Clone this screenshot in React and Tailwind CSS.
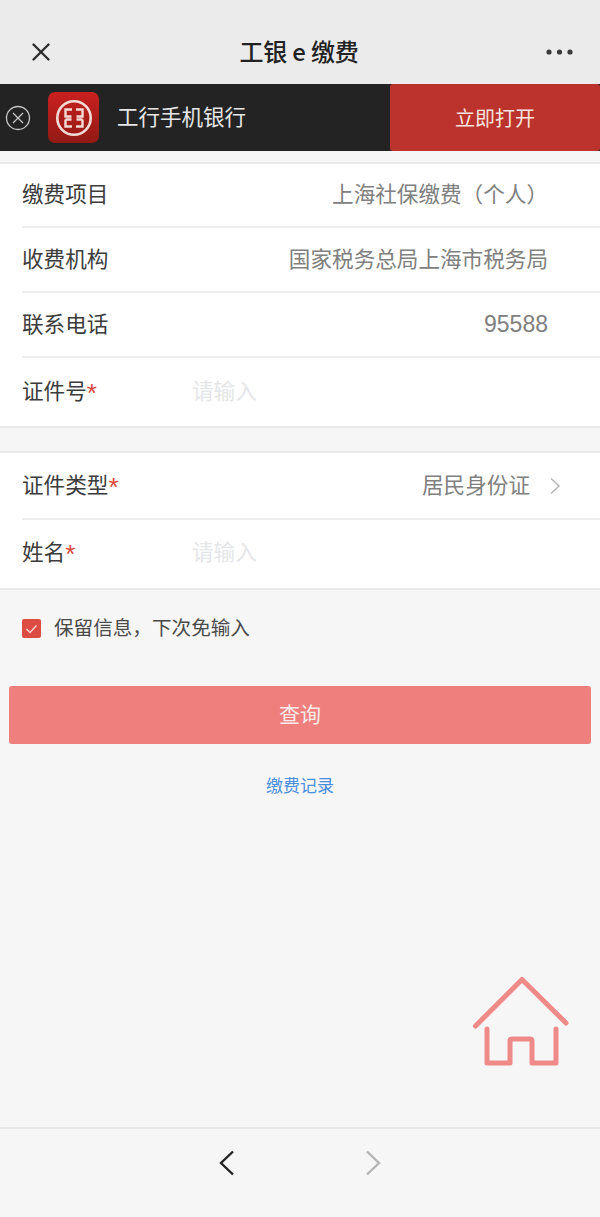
import { X } from 'lucide-react'

const Row = ({ label, required, value, digits, placeholder, chevron, className = 'h-[65px] pb-[6px]', last }) => (
  <div className={`relative flex items-center pl-[22px] ${className}`}>
    <span className="w-[170px] text-[21.6px] leading-none text-[#3c3c3c] whitespace-nowrap">
      {label}
      {required && (
        <span className="align-[-3px] text-[26px] leading-[0] text-[#d9483f]" style={{ fontFamily: '"Liberation Sans", sans-serif' }}>*</span>
      )}
    </span>
    {placeholder && <span className="text-[21.6px] leading-none text-[#e5e6e8]">{placeholder}</span>}
    {value && (
      <span
        className={`ml-auto leading-none text-[#808080] whitespace-nowrap ${chevron ? 'mr-[70px]' : 'mr-[52px]'} ${digits ? 'pt-[4px] text-[23px]' : 'text-[21.6px]'}`}
        style={digits ? { fontFamily: '"Liberation Sans", sans-serif' } : undefined}
      >
        {value}
      </span>
    )}
    {chevron && (
      <svg width="12" height="18" viewBox="0 0 12 18" fill="none" stroke="#b5b5b5" strokeWidth="1.5" className="absolute right-[39px] top-[24px]">
        <polyline points="2,1.5 10,9 2,16.5" />
      </svg>
    )}
    {!last && <div className="absolute left-[22px] right-0 bottom-0 h-[2px] bg-[#eeeeee]" />}
  </div>
)

export default function App() {
  return (
    <div className="flex h-[1217px] w-[600px] flex-col overflow-hidden bg-[#f6f6f6]" style={{ fontFamily: '"Noto Sans CJK SC", "Liberation Sans", sans-serif' }}>

      {/* Title bar */}
      <div className="relative flex h-[84px] shrink-0 items-center justify-center bg-[#ebebeb] pr-[2px] pt-[17px]">
        <X size={30} strokeWidth={1.9} className="absolute left-[26px] top-[37px] text-[#2b2b2b]" />
        <span className="text-[24px] font-medium leading-none tracking-[-0.2px] text-[#222222]">工银 e 缴费</span>
        <svg width="30" height="8" viewBox="0 0 30 8" className="absolute left-[545px] top-[48px]" fill="#3a3a3a">
          <circle cx="4" cy="4" r="2.6" />
          <circle cx="14.5" cy="4" r="2.6" />
          <circle cx="25" cy="4" r="2.6" />
        </svg>
      </div>

      {/* App banner */}
      <div className="flex h-[67px] shrink-0 items-center bg-[#232323]">
        <svg width="26" height="26" viewBox="0 0 26 26" fill="none" stroke="#c9c9c9" strokeWidth="1.3" className="ml-[5px] shrink-0">
          <circle cx="13" cy="13" r="11.5" />
          <path d="M8 8l10 10M18 8L8 18" />
        </svg>
        <div className="ml-[17px] flex h-[51px] w-[51px] shrink-0 items-center justify-center rounded-[7px] bg-gradient-to-b from-[#c9201f] to-[#931a14]">
          <svg width="38" height="38" viewBox="0 0 38 38" fill="none" stroke="#f3dcd6">
            <circle cx="19" cy="19" r="16.7" strokeWidth="2.6" />
            <path d="M17 10.5H10.5v7h6M10.5 20.5h6M10.5 20.5v7H17" strokeWidth="2.4" />
            <path d="M21 10.5h6.5v7h-6M27.5 20.5h-6M27.5 20.5v7H21" strokeWidth="2.4" />
          </svg>
        </div>
        <span className="ml-[18px] pb-[4px] text-[21.5px] leading-none text-[#e6e6e6]">工行手机银行</span>
        <div className="ml-auto flex h-full w-[210px] items-center justify-center rounded-[3px] bg-[#bb332c] text-[20px] text-[#f6e3df]">
          立即打开
        </div>
      </div>

      {/* Fixed info */}
      <div className="mt-[11px] border-y-2 border-[#e9e9e9] bg-white">
        <Row label="缴费项目" value="上海社保缴费（个人）" className="h-[64px] pb-[6px]" />
        <Row label="收费机构" value="国家税务总局上海市税务局" />
        <Row label="联系电话" value="95588" digits />
        <Row label="证件号" required placeholder="请输入" className="h-[68px] pb-[5px]" last />
      </div>

      {/* Identity */}
      <div className="mt-[23px] border-y-2 border-[#e9e9e9] bg-white">
        <Row label="证件类型" required value="居民身份证" chevron className="h-[67px] pb-[6px]" />
        <Row label="姓名" required placeholder="请输入" className="h-[68px] pb-[6px]" last />
      </div>

      {/* Remember checkbox */}
      <div className="mt-[29px] flex h-[19px] items-center pl-[22px]">
        <div className="flex h-[19px] w-[19px] items-center justify-center rounded-[2px] bg-[#dd4c43]">
          <svg width="13" height="10" viewBox="0 0 13 10" fill="none" stroke="#f8dcd9" strokeWidth="1.3">
            <polyline points="1.5,5 5,8.5 11.5,1.5" />
          </svg>
        </div>
        <span className="ml-[13px] pb-[3px] text-[19.6px] leading-none text-[#4a4a4a]">保留信息，下次免输入</span>
      </div>

      <div className="mx-[9px] mt-[48px] flex h-[58px] items-center justify-center rounded-[3px] bg-[#ee7f7c] pb-[2px] text-[21px] text-[#fbeaea]">
        查询
      </div>

      <div className="mt-[32px] text-center text-[17px] leading-none text-[#4a8fdc]">缴费记录</div>

      {/* Home shortcut */}
      <div className="mt-[183px] flex justify-end pr-[30px]">
        <svg width="98" height="92" viewBox="0 0 98 92" fill="none" stroke="#ee8a88" strokeWidth="5" strokeLinecap="round" strokeLinejoin="round">
          <path d="M3.5 50L50 3.5 94 47" />
          <path d="M15 53v34h23V65q0-2 2-2h18q2 0 2 2v22h24V53" />
        </svg>
      </div>

      {/* Browser nav */}
      <div className="mt-auto flex h-[90px] shrink-0 justify-center gap-[130px] border-t-2 border-[#e8e8e8] pt-[21px]">
        <svg width="16" height="26" viewBox="0 0 16 26" fill="none" stroke="#222222" strokeWidth="2.4">
          <polyline points="14,1.5 2,13 14,24.5" />
        </svg>
        <svg width="16" height="26" viewBox="0 0 16 26" fill="none" stroke="#b4b4b4" strokeWidth="2.4">
          <polyline points="2,1.5 14,13 2,24.5" />
        </svg>
      </div>
    </div>
  )
}
